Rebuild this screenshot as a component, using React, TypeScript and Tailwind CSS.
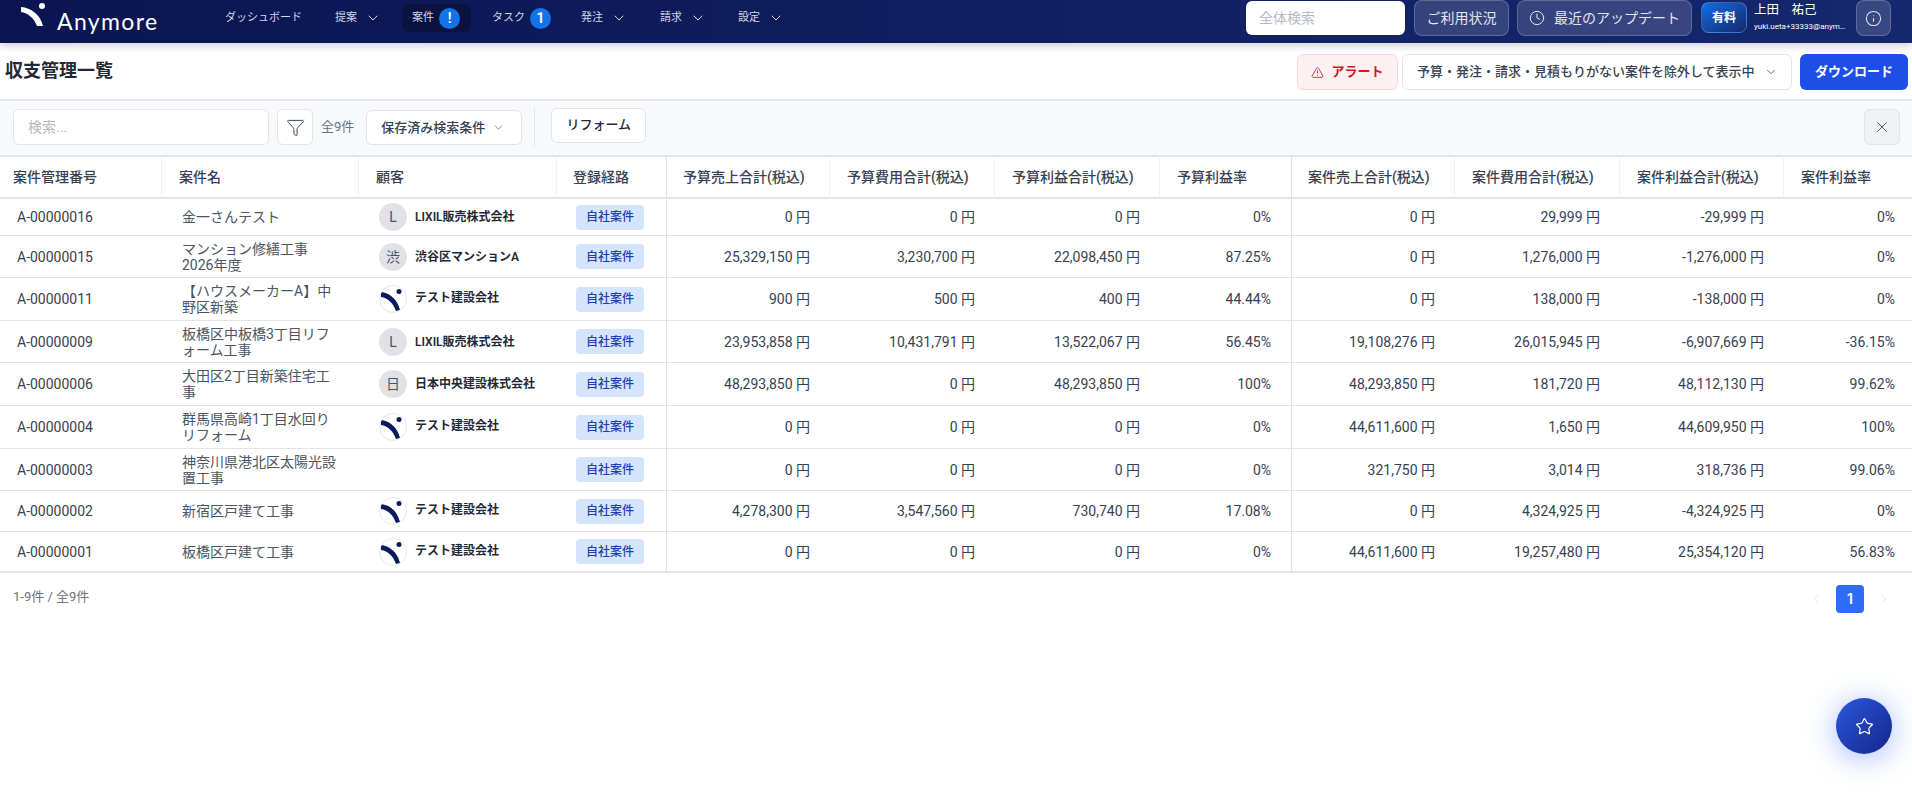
import { ChevronDown, ChevronLeft, ChevronRight, Clock, Funnel, Info, Star, TriangleAlert, X } from 'lucide-react'

const NAV = [
  { label: 'ダッシュボード' },
  { label: '提案', chevron: true },
  { label: '案件', badge: '!', active: true },
  { label: 'タスク', badge: '1' },
  { label: '発注', chevron: true },
  { label: '請求', chevron: true },
  { label: '設定', chevron: true },
]

const HEADERS = [
  '案件管理番号',
  '案件名',
  '顧客',
  '登録経路',
  '予算売上合計(税込)',
  '予算費用合計(税込)',
  '予算利益合計(税込)',
  '予算利益率',
  '案件売上合計(税込)',
  '案件費用合計(税込)',
  '案件利益合計(税込)',
  '案件利益率',
]

const WIDTHS = [162, 197, 198, 110, 163, 165, 165, 132, 163, 165, 164, 128]

type Row = {
  id: string
  name: string
  avatar?: string
  client?: string
  h: string
  nums: string[]
}

const ROWS: Row[] = [
  { id: 'A-00000016', name: '金一さんテスト', avatar: 'L', client: 'LIXIL販売株式会社', h: 'h-[37px]', nums: ['0 円', '0 円', '0 円', '0%', '0 円', '29,999 円', '-29,999 円', '0%'] },
  { id: 'A-00000015', name: 'マンション修繕工事 2026年度', avatar: '渋', client: '渋谷区マンションA', h: 'h-[42px]', nums: ['25,329,150 円', '3,230,700 円', '22,098,450 円', '87.25%', '0 円', '1,276,000 円', '-1,276,000 円', '0%'] },
  { id: 'A-00000011', name: '【ハウスメーカーA】中野区新築', avatar: 'logo', client: 'テスト建設会社', h: 'h-[43px]', nums: ['900 円', '500 円', '400 円', '44.44%', '0 円', '138,000 円', '-138,000 円', '0%'] },
  { id: 'A-00000009', name: '板橋区中板橋3丁目リフォーム工事', avatar: 'L', client: 'LIXIL販売株式会社', h: 'h-[42px]', nums: ['23,953,858 円', '10,431,791 円', '13,522,067 円', '56.45%', '19,108,276 円', '26,015,945 円', '-6,907,669 円', '-36.15%'] },
  { id: 'A-00000006', name: '大田区2丁目新築住宅工事', avatar: '日', client: '日本中央建設株式会社', h: 'h-[43px]', nums: ['48,293,850 円', '0 円', '48,293,850 円', '100%', '48,293,850 円', '181,720 円', '48,112,130 円', '99.62%'] },
  { id: 'A-00000004', name: '群馬県高崎1丁目水回りリフォーム', avatar: 'logo', client: 'テスト建設会社', h: 'h-[43px]', nums: ['0 円', '0 円', '0 円', '0%', '44,611,600 円', '1,650 円', '44,609,950 円', '100%'] },
  { id: 'A-00000003', name: '神奈川県港北区太陽光設置工事', h: 'h-[42px]', nums: ['0 円', '0 円', '0 円', '0%', '321,750 円', '3,014 円', '318,736 円', '99.06%'] },
  { id: 'A-00000002', name: '新宿区戸建て工事', avatar: 'logo', client: 'テスト建設会社', h: 'h-[41px]', nums: ['4,278,300 円', '3,547,560 円', '730,740 円', '17.08%', '0 円', '4,324,925 円', '-4,324,925 円', '0%'] },
  { id: 'A-00000001', name: '板橋区戸建て工事', avatar: 'logo', client: 'テスト建設会社', h: 'h-[41px]', nums: ['0 円', '0 円', '0 円', '0%', '44,611,600 円', '19,257,480 円', '25,354,120 円', '56.83%'] },
]

const Avatar = ({ value }: { value: string }) => {
  if (value === 'logo') {
    return (
      <div className="w-[28px] h-[28px] shrink-0 rounded-full bg-white border border-[#e5e7eb] overflow-hidden">
        <svg width="26" height="26" viewBox="0 0 26 26">
          <path d="M1 6 C9 7 17 12 20 24 L16 25 C13 17 8 12 1 11 Z" fill="#0b1a5c" />
          <circle cx="19" cy="5.5" r="2.5" fill="#0b1a5c" />
        </svg>
      </div>
    )
  }
  return (
    <div className="w-[28px] h-[28px] shrink-0 rounded-full bg-[#e0e2e8] flex items-center justify-center text-sm text-[#4b5563]">
      {value}
    </div>
  )
}

const headerPad = (i: number) => {
  if (i === 0) return 'pl-[13px]'
  if (i === 3 || i === 4 || i === 8) return 'pl-[16px]'
  return 'pl-[17px]'
}

const App = () => {
  return (
    <div className="relative min-h-screen bg-white text-[#1f2937] font-[Roboto,'Noto_Sans_CJK_JP',sans-serif]">
      <header className="relative z-10 h-[43px] flex items-start bg-gradient-to-r from-[#0a1550] to-[#15286e] shadow-[0_3px_8px_rgba(20,30,80,0.2)]">
        <div className="w-[215px] flex items-start">
          <svg className="ml-[20px]" width="28" height="30" viewBox="20 0 28 30">
            <path d="M21 7 C31 8 40 14 43 26 L37 26 C34 18 28 13 21 12 Z" fill="white" />
            <circle cx="42" cy="6" r="3" fill="white" />
          </svg>
          <span className="ml-[9px] mt-[7px] text-[23px] leading-[28px] tracking-[0.06em] text-white font-[Lato,sans-serif]">Anymore</span>
        </div>
        <nav className="grid grid-cols-[110px_77px_80px_89px_79px_78px_auto] mt-[4px]">
          {NAV.map((n) => (
            <div key={n.label} className={`w-fit h-[28px] px-[10px] flex items-center rounded-lg text-[11px] text-[#d3d7e6] ${n.active ? 'bg-[#0a1240] pr-[11px]' : ''}`}>
              {n.label}
              {n.chevron && <ChevronDown size={16} strokeWidth={1.5} className="ml-[8px]" />}
              {n.badge && (
                <span className="ml-[5px] w-[21px] h-[21px] rounded-full bg-[#1374ea] text-white text-sm font-semibold flex items-center justify-center">
                  {n.badge}
                </span>
              )}
            </div>
          ))}
        </nav>
        <div className="ml-auto pr-[21px] flex items-start">
          <div className="w-[159px] h-[34px] mt-[1px] px-[13px] flex items-center rounded-md bg-white text-sm text-[#b4b9c4]">全体検索</div>
          <button className="ml-[9px] w-[95px] h-[36px] rounded-lg border border-white/20 bg-white/15 text-sm text-[#e3e6f0]">ご利用状況</button>
          <button className="ml-[8px] w-[175px] h-[36px] flex items-center justify-center gap-[9px] rounded-lg border border-white/20 bg-white/15 text-sm text-[#e3e6f0]">
            <Clock size={16} strokeWidth={1.5} />
            最近のアップデート
          </button>
          <div className="ml-[9px] mt-[2px] w-[46px] h-[31px] flex items-center justify-center rounded-lg border border-white/20 bg-gradient-to-br from-[#0d6fe6] to-[#12286e] text-xs font-bold text-white">有料</div>
          <div className="ml-[7px] w-[94px] text-white">
            <div className="text-[12.5px] leading-[16px] mt-[2px]">上田　祐己</div>
            <div className="text-[8px] leading-[12px] mt-[3px] truncate">yuki.ueta+33333@anymore.jp</div>
          </div>
          <button className="ml-[8px] w-[35px] h-[36px] flex items-center justify-center rounded-lg border border-white/20 bg-white/15 text-[#e3e6f0]">
            <Info size={17} strokeWidth={1.5} />
          </button>
        </div>
      </header>

      <div className="h-[58px] flex items-start border-b-2 border-[#e3e4ea]">
        <h1 className="ml-[5px] mt-[14px] text-lg leading-[28px] font-semibold text-[#1f2937]">収支管理一覧</h1>
        <div className="ml-auto pr-[4px] mt-[11px] flex items-start">
          <div className="w-[101px] h-[36px] flex items-center justify-center gap-[7px] rounded-md border border-[#fbd5d5] bg-[#fdf0f0] text-[13px] font-semibold text-[#d9102a]">
            <TriangleAlert size={13} strokeWidth={1.5} />
            アラート
          </div>
          <div className="ml-[4px] w-[390px] h-[36px] pl-[14px] flex items-center rounded-md border border-[#e2e4ea] bg-white text-[13px] font-medium text-[#374151]">
            予算・発注・請求・見積もりがない案件を除外して表示中
            <ChevronDown size={14} strokeWidth={1.5} className="ml-[9px] text-[#4b5563]" />
          </div>
          <button className="ml-[8px] w-[108px] h-[36px] rounded-md bg-[#1d4ee8] text-[13px] font-semibold text-white">ダウンロード</button>
        </div>
      </div>

      <div className="h-[54px] flex items-start bg-[#f8f9fb]">
        <div className="ml-[13px] mt-[8px] w-[256px] h-[36px] px-[14px] flex items-center rounded-md border border-[#e2e4ea] bg-white text-sm text-[#b4b9c4]">検索...</div>
        <button className="ml-[8px] mt-[8px] w-[36px] h-[36px] flex items-center justify-center rounded-md border border-[#e2e4ea] bg-white text-[#374151]">
          <Funnel size={19} strokeWidth={1.2} />
        </button>
        <span className="ml-[8px] mt-[8px] leading-[35px] text-[13px] text-[#6b7280]">全9件</span>
        <div className="ml-[12px] mt-[9px] w-[156px] h-[35px] pl-[14px] flex items-center rounded-md border border-[#e2e4ea] bg-white text-[13px] font-medium text-[#374151]">
          保存済み検索条件
          <ChevronDown size={13} strokeWidth={1.5} className="ml-[7px] text-[#6b7280]" />
        </div>
        <div className="ml-[12px] mt-[7px] w-px h-[39px] bg-[#e2e4ea]" />
        <button className="ml-[16px] mt-[7px] w-[95px] h-[35px] pb-[2px] rounded-md border border-[#e2e4ea] bg-white text-[13px] font-medium text-[#1f2937]">リフォーム</button>
        <button className="ml-auto mr-[12px] mt-[8px] w-[36px] h-[36px] flex items-center justify-center rounded-md border border-[#e2e4ea] bg-[#f0f1f4] text-[#4b5563]">
          <X size={18} strokeWidth={1.25} />
        </button>
      </div>

      <table className="w-full table-fixed border-separate border-spacing-0 text-sm">
        <colgroup>
          {WIDTHS.map((w, i) => (
            <col key={i} style={{ width: w }} />
          ))}
        </colgroup>
        <thead>
          <tr className="h-[44px]">
            {HEADERS.map((h, i) => (
              <th
                key={h}
                className={`border-t-2 border-b-2 border-[#e3e4ea] text-left font-medium text-[#374151] whitespace-nowrap ${headerPad(i)} ${i === 3 || i === 7 ? 'border-r border-r-[#dfe1e8]' : i === 11 ? '' : 'border-r border-r-[#f1f2f5]'}`}
              >
                {h}
              </th>
            ))}
          </tr>
        </thead>
        <tbody>
          {ROWS.map((r, idx) => {
            const last = idx === ROWS.length - 1
            const cell = `border-b ${last ? 'border-b-2' : ''} border-[#e3e4ea]`
            return (
              <tr key={r.id} className={r.h}>
                <td className={`${cell} pl-[17px] text-[#374151]`}>{r.id}</td>
                <td className={`${cell} pl-[20px] pr-[22px] leading-[16px] text-[#4b5563]`}>{r.name}</td>
                <td className={cell}>
                  {r.avatar && (
                    <div className="ml-[20px] flex items-center gap-[8px]">
                      <Avatar value={r.avatar} />
                      <span className={`text-xs font-semibold whitespace-nowrap text-[#1f2937] ${r.avatar === 'logo' ? '-mt-[2px]' : ''}`}>{r.client}</span>
                    </div>
                  )}
                </td>
                <td className={`${cell} border-r border-r-[#dfe1e8]`}>
                  <span className="ml-[19px] w-[68px] h-[25px] flex items-center justify-center rounded bg-[#d5e4fd] text-xs font-medium text-[#1e3fae]">自社案件</span>
                </td>
                {r.nums.map((n, i) => (
                  <td
                    key={i}
                    className={`${cell} text-right text-[#374151] whitespace-nowrap ${i === 7 ? 'pr-[17px]' : 'pr-[20px]'} ${i === 3 ? 'border-r border-r-[#dfe1e8]' : ''}`}
                  >
                    {n}
                  </td>
                ))}
              </tr>
            )
          })}
        </tbody>
      </table>

      <div className="flex items-start">
        <span className="ml-[13px] mt-[15px] text-[13px] leading-[18px] text-[#6b7280]">1-9件 / 全9件</span>
        <div className="ml-auto mr-[21px] mt-[12px] flex items-center">
          <ChevronLeft size={14} strokeWidth={1.5} className="text-[#dfe1e8]" />
          <span className="ml-[13px] w-[28px] h-[28px] flex items-center justify-center rounded bg-[#2d6ef5] text-sm font-semibold text-white font-[Inter,sans-serif]">1</span>
          <ChevronRight size={14} strokeWidth={1.5} className="ml-[13px] text-[#dfe1e8]" />
        </div>
      </div>

      <button className="absolute right-[20px] top-[698px] w-[56px] h-[56px] rounded-full flex items-center justify-center bg-gradient-to-br from-[#2b58e0] to-[#14268a] text-white shadow-[0_4px_30px_rgba(50,100,255,0.45)]">
        <Star size={19} strokeWidth={1.5} />
      </button>
    </div>
  )
}

export default App
